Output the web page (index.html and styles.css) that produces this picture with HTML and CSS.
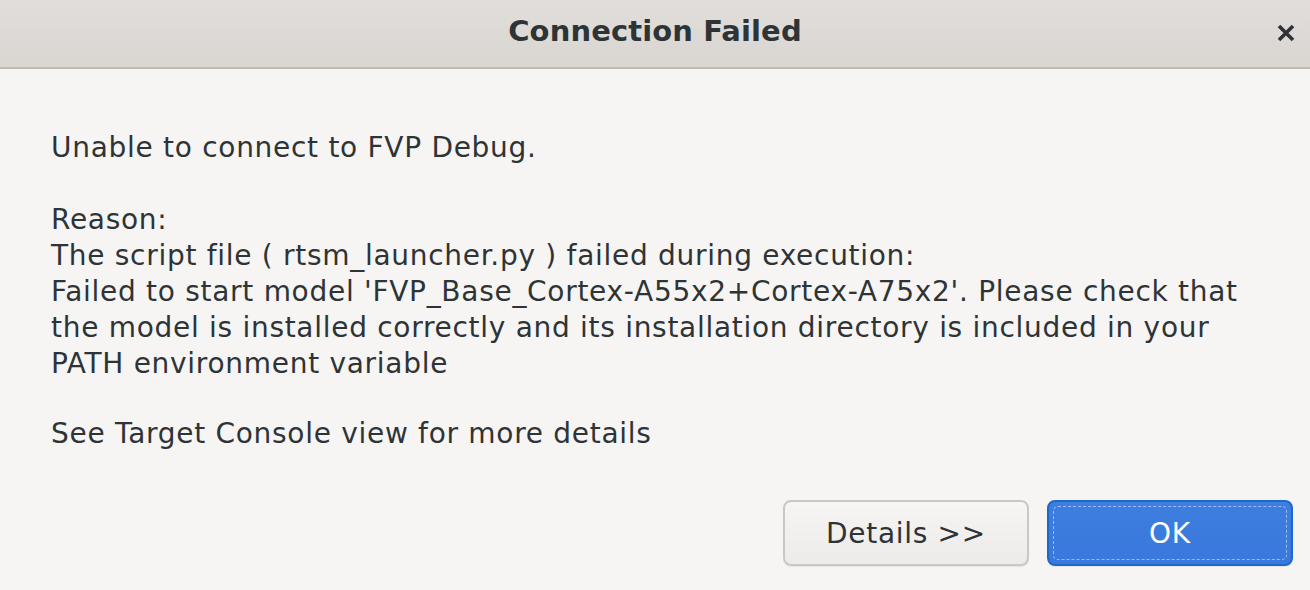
FILE: index.html
```html
<!DOCTYPE html>
<html>
<head>
<meta charset="utf-8">
<link rel="stylesheet" href="styles.css">
</head>
<body>
<div class="dialog">
  <header class="titlebar">
    <div class="title">Connection Failed</div>
    <button class="close" aria-label="Close">
      <svg width="18" height="18" viewBox="0 0 18 18"><path d="M2 2 L16 16 M16 2 L2 16" stroke="#2e3436" stroke-width="3.6" stroke-linecap="butt"/></svg>
    </button>
  </header>
  <main class="content">
    <p class="line">Unable to connect to FVP Debug.</p>
    <p class="line blank">&nbsp;</p>
    <p class="line">Reason:</p>
    <p class="line">The script file ( rtsm_launcher.py ) failed during execution:</p>
    <p class="line">Failed to start model 'FVP_Base_Cortex-A55x2+Cortex-A75x2'. Please check that</p>
    <p class="line">the model is installed correctly and its installation directory is included in your</p>
    <p class="line">PATH environment variable</p>
    <p class="line blank short">&nbsp;</p>
    <p class="line">See Target Console view for more details</p>
  </main>
  <footer class="actions">
    <button class="btn">Details &gt;&gt;</button>
    <button class="btn primary"><span class="focus">OK</span></button>
  </footer>
</div>
</body>
</html>
```

FILE: styles.css
```css
* { box-sizing: border-box; }
html, body {
  margin: 0;
  padding: 0;
  width: 1310px;
  height: 590px;
  overflow: hidden;
  background: #f6f5f4;
  font-family: "DejaVu Sans", sans-serif;
  color: #2e3436;
}
.dialog {
  display: flex;
  flex-direction: column;
  height: 590px;
}
.titlebar {
  position: relative;
  flex-shrink: 0;
  height: 69px;
  background: linear-gradient(#e1dedb, #d9d5d1);
  border-bottom: 2px solid #c0b9b2;
  display: flex;
  align-items: center;
  justify-content: center;
}
.title {
  font-family: "DejaVu Sans", sans-serif;
  font-weight: bold;
  font-size: 29px;
  letter-spacing: 0.1px;
  color: #2e3436;
  margin-top: -6px;
}
.close {
  position: absolute;
  left: 1277px;
  top: 24px;
  width: 18px;
  height: 18px;
  padding: 0;
  border: 0;
  background: none;
  display: flex;
}
.content {
  flex-shrink: 0;
  padding: 61px 0 0 51px;
  font-size: 28px;
  letter-spacing: 0.71px;
  line-height: 36px;
}
.line {
  margin: 0;
  white-space: pre;
}
.line.short {
  height: 34px;
}
.actions {
  margin-top: auto;
  display: flex;
  justify-content: flex-end;
  gap: 18px;
  padding: 0 17px 24px 0;
}
.btn {
  width: 246px;
  height: 66px;
  border-radius: 8px;
  border: 2px solid #cdc7c2;
  background: linear-gradient(#f6f5f4, #edebe9);
  font-family: "DejaVu Sans", sans-serif;
  font-size: 28px;
  letter-spacing: 0.7px;
  color: #2e3436;
  padding: 0;
  box-shadow: 0 1px 1px rgba(0,0,0,0.07);
}
.btn.primary {
  border-color: #1b6acb;
  background: linear-gradient(#3d7ee0, #3a78dc);
  color: #ffffff;
  padding: 4px;
}
.focus {
  display: flex;
  width: 100%;
  height: 100%;
  align-items: center;
  justify-content: center;
  border: 1px dashed rgba(255,255,255,0.5);
  border-radius: 5px;
}
```
